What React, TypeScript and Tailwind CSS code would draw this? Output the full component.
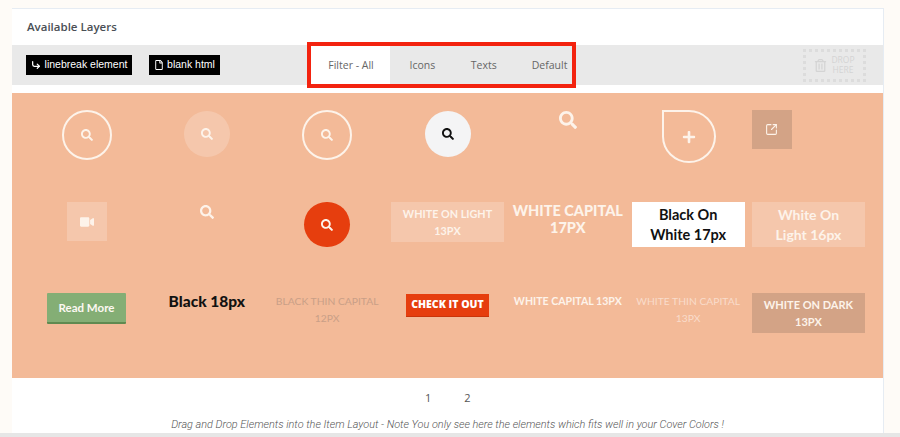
import React from "react";
import { FaSearch, FaVideo, FaPlus, FaRegFile, FaRegTrashAlt } from "react-icons/fa";
import { CornerDownRight, SquareArrowOutUpRight } from "lucide-react";

const raleway = "font-['Lato','Noto_Sans',sans-serif]";

const Cell: React.FC<{ children: React.ReactNode; className?: string }> = ({ children, className }) => (
  <div className={`flex justify-center items-start ${className ?? ""}`}>{children}</div>
);

const App: React.FC = () => {
  return (
    <div className="w-[900px] h-[437px] overflow-hidden bg-[#fefbf7] font-['Open_Sans',sans-serif] flex flex-col">
      <div className="mt-2 ml-3 w-[872px] h-[425px] shrink-0 bg-white border-r border-t border-[#e6ecf3] flex flex-col">
        <div className="h-9 shrink-0 pl-[15px] pt-[10px] text-[11.5px] leading-4 font-semibold text-[#4a4f55]">
          Available Layers
        </div>

        {/* toolbar */}
        <div className="h-10 shrink-0 bg-[#e9e9e9] flex items-center pl-[14px]">
          <div className="w-[106px] h-5 bg-black text-white text-[10.5px] flex items-center justify-center gap-1 font-['Liberation_Sans',sans-serif]">
            <CornerDownRight size={10} strokeWidth={3} />
            <span>linebreak element</span>
          </div>
          <div className="ml-[17px] w-[71px] h-5 bg-black text-white text-[10.5px] flex items-center justify-center gap-[3px] font-['Liberation_Sans',sans-serif]">
            <FaRegFile size={10} />
            <span>blank html</span>
          </div>
          <div className="relative ml-[91px] w-[260px] h-[38px] flex items-stretch text-[10.5px] text-[#666]">
            <div className="absolute -left-1 -top-1 w-[269px] h-[46px] border-[4px] border-[#f3230f] pointer-events-none" />
            <div className="w-[79px] bg-white flex items-center justify-center pl-[1px] pt-[1px]">Filter - All</div>
            <div className="pl-[19.5px] pr-[18.5px] pt-[1px] flex items-center">Icons</div>
            <div className="px-[17px] pt-[1px] flex items-center">Texts</div>
            <div className="pl-[18px] pt-[1px] flex items-center">Default</div>
          </div>
          <div className="ml-[232px] w-[63px] h-[33px] border-[3px] border-dotted border-[#dcdcdc] flex items-center justify-center gap-1 text-[#d4d4d4]">
            <FaRegTrashAlt size={13} />
            <div className="text-[8.5px] leading-[10px] text-center">
              <div>DROP</div>
              <div>HERE</div>
            </div>
          </div>
        </div>

        <div className="h-2 shrink-0 bg-white" />

        {/* layers */}
        <div className="h-[285px] shrink-0 bg-[#f3ba98] pt-[17px] pl-[18px]">
          <div className={`grid grid-cols-[repeat(7,113px)] grid-rows-[92px_91px_85px] gap-x-[7.33px] ${raleway}`}>
            {/* row 1 */}
            <Cell>
              <div className="w-[50px] h-[50px] rounded-full border-2 border-[#fdf3ea] flex items-center justify-center text-[#fdf3ea]">
                <FaSearch size={12} />
              </div>
            </Cell>
            <Cell>
              <div className="mt-[1px] w-[46px] h-[46px] rounded-full bg-white/20 flex items-center justify-center text-[#fdf3ea]">
                <FaSearch size={12} />
              </div>
            </Cell>
            <Cell>
              <div className="w-[50px] h-[50px] rounded-full border-2 border-[#fdf3ea] flex items-center justify-center text-[#fdf3ea]">
                <FaSearch size={12} />
              </div>
            </Cell>
            <Cell>
              <div className="mt-[1px] ml-[1px] w-[46px] h-[46px] rounded-full bg-[#f4f4f5] flex items-center justify-center text-[#111]">
                <FaSearch size={12} />
              </div>
            </Cell>
            <Cell>
              <div className="pt-[1px] text-[#fdf3ea]">
                <FaSearch size={18} />
              </div>
            </Cell>
            <Cell>
              <div className="ml-[2px] w-[54px] h-[53px] rounded-[50%] rounded-tl-none border-2 border-[#fdf3ea] flex items-center justify-center text-[#fdf3ea]">
                <FaPlus size={14} />
              </div>
            </Cell>
            <div className="flex items-start">
              <div className="w-10 h-[39px] bg-[#d3a386] flex items-center justify-center text-[#fdf3ea]">
                <SquareArrowOutUpRight size={13} strokeWidth={2} />
              </div>
            </div>

            {/* row 2 */}
            <Cell>
              <div className="w-10 h-[39px] bg-white/20 flex items-center justify-center text-[#fdf3ea]">
                <FaVideo size={14} />
              </div>
            </Cell>
            <Cell>
              <div className="mt-[3px] text-[#fdf3ea]">
                <FaSearch size={14} />
              </div>
            </Cell>
            <Cell>
              <div className="w-[46px] h-[45px] rounded-full bg-[#e63e0e] flex items-center justify-center text-[#fdf3ea]">
                <FaSearch size={12} />
              </div>
            </Cell>
            <Cell>
              <div className="w-[113px] h-10 bg-white/20 text-[#fdf3ea] text-[10.8px] leading-[17px] font-bold text-center flex items-center justify-center">
                <span>
                  WHITE ON LIGHT
                  <br />
                  13PX
                </span>
              </div>
            </Cell>
            <Cell>
              <div className="text-[#fdf3ea] text-[14.5px] leading-[17px] font-black text-center whitespace-nowrap">
                WHITE CAPITAL
                <br />
                17PX
              </div>
            </Cell>
            <Cell>
              <div className="w-[113px] h-[45px] bg-white text-[#111] text-[14.5px] leading-[20px] font-bold text-center flex items-center justify-center">
                <span>
                  Black On
                  <br />
                  White 17px
                </span>
              </div>
            </Cell>
            <Cell>
              <div className="w-[113px] h-[45px] bg-white/20 text-[#fdf3ea] text-[14px] leading-[20px] font-bold text-center flex items-center justify-center">
                <span>
                  White On
                  <br />
                  Light 16px
                </span>
              </div>
            </Cell>

            {/* row 3 */}
            <Cell>
              <div className="w-[79px] h-[31px] bg-[#84ae75] border-b-2 border-[#5f8a50] rounded-[1px] text-[#fdf8f2] text-[11.5px] font-bold flex items-center justify-center">
                Read More
              </div>
            </Cell>
            <Cell>
              <div className="-mt-[2px] text-[#111] text-[15.5px] leading-5 font-black">Black 18px</div>
            </Cell>
            <Cell>
              <div className="text-[#c99f87] text-[10.3px] leading-[17px] font-normal text-center">
                BLACK THIN CAPITAL
                <br />
                12PX
              </div>
            </Cell>
            <Cell>
              <div className="w-[83px] h-[23px] mt-[1px] bg-[#e63e0e] border-b border-[#c9340a] text-white text-[10.5px] font-black font-['Open_Sans',sans-serif] flex items-center justify-center">
                CHECK IT OUT
              </div>
            </Cell>
            <Cell>
              <div className="text-[#fdf3ea] text-[10.6px] leading-[17px] font-bold whitespace-nowrap">WHITE CAPITAL 13PX</div>
            </Cell>
            <Cell>
              <div className="text-[#f9dccb] text-[10.3px] leading-[17px] font-normal text-center">
                WHITE THIN CAPITAL
                <br />
                13PX
              </div>
            </Cell>
            <Cell>
              <div className="w-[113px] h-10 bg-[#d3a386] text-[#fdf3ea] text-[11px] leading-[17px] font-bold text-center flex items-center justify-center">
                <span>
                  WHITE ON DARK
                  <br />
                  13PX
                </span>
              </div>
            </Cell>
          </div>
        </div>

        {/* pagination */}
        <div className="h-10 shrink-0 flex items-center pl-[413px] gap-[33px] text-[11px] text-[#555] pt-[1px]">
          <span>1</span>
          <span>2</span>
        </div>
        <div className="text-center text-[10.9px] leading-3 italic font-['Roboto',sans-serif] font-light text-[#555] pt-[1px]">
          Drag and Drop Elements into the Item Layout - Note You only see here the elements which fits well in your Cover Colors !
        </div>
      </div>
      <div className="h-1 shrink-0 bg-[#e6e6e6]" />
    </div>
  );
};

export default App;
